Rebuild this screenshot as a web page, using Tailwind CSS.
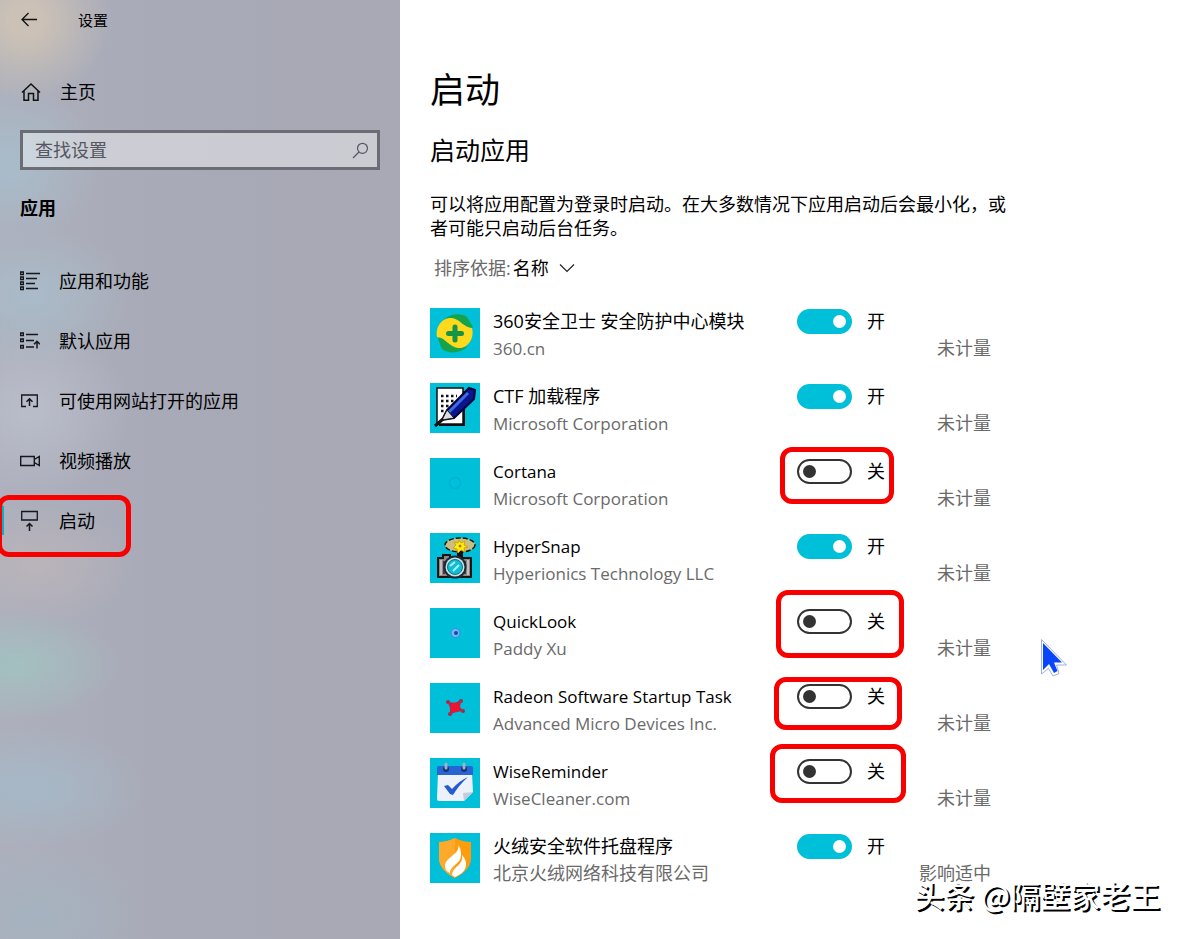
<!DOCTYPE html>
<html lang="zh-CN">
<head>
<meta charset="utf-8">
<meta name="viewport" content="width=device-width, initial-scale=1">
<title>设置</title>
<script src="https://cdn.jsdelivr.net/npm/@tailwindcss/browser@4"></script>
</head>
<body class="relative flex min-h-screen overflow-x-hidden bg-white font-['Open_Sans','Noto_Sans_CJK_SC',sans-serif] text-[18px] leading-[27px] text-black">

<aside class="w-[400px] shrink-0 bg-[#a8a9b6] bg-[radial-gradient(ellipse_85px_80px_at_25px_20px,#cbc1b6_20%,transparent),radial-gradient(ellipse_90px_80px_at_10px_165px,#a9bbc9_10%,transparent),radial-gradient(ellipse_100px_70px_at_30px_295px,#aabac8_10%,transparent),radial-gradient(ellipse_100px_90px_at_30px_410px,#b8bcc8_10%,transparent),radial-gradient(ellipse_100px_60px_at_35px_565px,#b9b3ba_10%,transparent),radial-gradient(ellipse_105px_55px_at_15px_665px,#a4bfc0_10%,transparent),radial-gradient(ellipse_115px_60px_at_30px_788px,#a7b7c6_15%,transparent),radial-gradient(ellipse_110px_70px_at_35px_915px,#a6b2bf_10%,transparent),linear-gradient(90deg,#adb0bc,#a8aab7_40%,#a9a8b5)]">
  <header class="flex h-10 items-center">
    <button type="button" aria-label="返回" class="ml-5 flex h-8 w-5 items-center">
      <svg width="18" height="16" viewBox="0 0 18 16" fill="none" stroke="#111" stroke-width="1.3"><path d="M17 7.5H2M8.500 1L2 7.500L8.500 14"/></svg>
    </button>
    <span class="ml-[38px] text-[15px]">设置</span>
  </header>

  <a href="#home" class="mt-8 flex h-10 items-center px-5">
    <svg width="22" height="20" viewBox="0 0 22 20" fill="none" stroke="#111" stroke-width="1.5"><path d="M2 10.500L11 2L20 10.500M4 9V18.300H8.500V11.500H13.500V18.300H18V9"/></svg>
    <span class="ml-[18px]">主页</span>
  </a>

  <div class="mx-5 mt-[18px] flex h-10 items-center border-3 border-[#6b6c74] bg-white/40 pr-2 pl-3">
    <input type="text" aria-label="查找设置" placeholder="查找设置" class="min-w-0 flex-1 bg-transparent outline-none placeholder:text-[#55565f]">
    <svg width="17" height="17" viewBox="0 0 17 17" fill="none" stroke="#55565f" stroke-width="1.2"><circle cx="10.500" cy="6.300" r="5"/><path d="M7 10L1 16"/></svg>
  </div>

  <h2 class="mt-[25px] px-5 font-bold">应用</h2>

  <nav class="mt-[29px]">
    <a href="#apps" class="flex h-[60px] items-center gap-[19px] px-5">
      <svg width="20" height="20" viewBox="0 0 20 20" fill="none" stroke="#16161c"><path d="M.7 1h2.600v2.600H.7zM.7 6h2.600v2.600H.7zM.7 11h2.600v2.600H.7zM.7 16h2.600v2.600H.7z" stroke-width="1.400"/><path d="M6 2.500h14M6 7.500h11M6 12.500h9M6 17.500h12" stroke-width="1.300"/></svg>
      <span>应用和功能</span>
    </a>
    <a href="#defaults" class="flex h-[60px] items-center gap-[19px] px-5">
      <svg width="20" height="20" viewBox="0 0 20 20" fill="none" stroke="#16161c"><path d="M.7 2h2.600v2.600H.7zM.7 8h2.600v2.600H.7zM.7 14.500h2.600v2.600H.7z" stroke-width="1.400"/><path d="M6 3.500h12M6 9.500h8M6 16h8" stroke-width="1.300"/><path d="M17 17.500V10.500M14 13.300L17 10.300L20 13.300" stroke-width="1.500"/></svg>
      <span>默认应用</span>
    </a>
    <a href="#websites" class="flex h-[60px] items-center gap-[19px] px-5">
      <svg width="20" height="20" viewBox="0 0 20 20" fill="none" stroke="#16161c"><path d="M6 15.500H1.700V4H17.300V15.500H13" stroke-width="1.300"/><path d="M9.500 15V8M6.500 10.800L9.500 7.800L12.500 10.800" stroke-width="1.500"/></svg>
      <span>可使用网站打开的应用</span>
    </a>
    <a href="#video" class="flex h-[60px] items-center gap-[19px] px-5">
      <svg width="20" height="20" viewBox="0 0 20 20" fill="none" stroke="#16161c" stroke-width="1.400"><path d="M.7 5.500H14.300V14.500H.7zM14.300 8.500L19.300 5.500V14.500L14.300 11.500"/></svg>
      <span>视频播放</span>
    </a>
    <a href="#startup" aria-current="page" class="relative flex h-[60px] items-center gap-[19px] px-5">
      <span class="absolute top-[15px] left-0 h-[29px] w-1 bg-[#00b4cc]"></span>
      <svg width="20" height="24" viewBox="0 0 20 24" fill="none" stroke="#16161c"><path d="M1.700 2.500H17.300V11H1.700z" stroke-width="1.300"/><path d="M9.500 22V14.500M6.500 17.500L9.500 14.500L12.500 17.500" stroke-width="1.500"/></svg>
      <span>启动</span>
      <span class="absolute top-1 -left-[3px] h-[62px] w-[134px] rounded-xl border-5 border-[#f80000]"></span>
    </a>
  </nav>
</aside>

<main class="min-w-0 flex-1 px-[30px]">
  <div class="max-w-[561px]">
    <h1 class="mt-[66px] text-[35px] leading-[48px]">启动</h1>
    <h2 class="mt-[18px] text-[25px] leading-[36px]">启动应用</h2>
    <p class="mt-[24px] -mr-4 leading-6">可以将应用配置为登录时启动。在大多数情况下应用启动后会最小化，或者可能只启动后台任务。</p>
    <div class="mt-3 flex h-8 items-center pl-1">
      <label for="sort" class="text-[#6a6a6a]">排序依据:</label>
      <div class="relative ml-[2px] flex items-center">
        <select id="sort" class="appearance-none bg-transparent pr-[26px] outline-none"><option>名称</option></select>
        <svg class="pointer-events-none absolute right-0" width="16" height="10" viewBox="0 0 16 10" fill="none" stroke="#222" stroke-width="1.200"><path d="M1 1.500L8 8.500L15 1.500"/></svg>
      </div>
    </div>

    <ul class="mt-6">
      <li class="relative flex h-[75px] items-start">
        <svg class="size-[50px] shrink-0 bg-[#00bfd8]" viewBox="0 0 50 50"><path d="M13 13C20 5 31 5 37 9L43 19C41 22 38 19 34 17C27 13 22 9 13 13z" fill="#16a34c"/><path d="M38 38C30 46 19 46 12 41L8 31C10 28 13 31 16 33C23 38 29 42 38 38z" fill="#16a34c"/><path d="M7 29C5 18 13 9 22 10C30 11 34 20 42 20C45 31 37 41 28 40C19 39 15 29 7 29z" fill="#ffd91c"/><path d="M25 19v13M18.500 25.500h13" stroke="#159447" stroke-width="5" stroke-linecap="round"/></svg>
        <div class="ml-[13px] min-w-0 flex-1"><p>360安全卫士 安全防护中心模块</p><p class="text-[17px] text-[#6a6a6a]">360.cn</p></div>
        <label class="flex w-[89px] shrink-0 items-center gap-[15px]"><input type="checkbox" role="switch" checked class="h-[25px] w-[55px] shrink-0 appearance-none rounded-full border-2 border-[#333] before:m-1 before:block before:size-[13px] before:rounded-full before:bg-[#333] checked:border-[#00bfd8] checked:bg-[#00bfd8] checked:before:translate-x-[30px] checked:before:bg-white"><span>开</span></label>
        <span class="mt-[27px] w-[105px] shrink-0 text-right text-[#6a6a6a]">未计量</span>
      </li>
      <li class="relative flex h-[75px] items-start">
        <svg class="size-[50px] shrink-0 bg-[#00bfd8]" viewBox="0 0 50 50"><path d="M9 8h26v35H9z" fill="#101010"/><path d="M7 5h26v36H7z" fill="#fff" stroke="#111" stroke-width="1.500"/><path d="M11 13h16M11 18h16M11 23h14M11 28h9" stroke="#111" stroke-width="2.500" stroke-dasharray="2.500 2.500"/><path d="M12 37L17 27L39 5L45 7L44 16L24 35z" fill="#0b168e" stroke="#02043a" stroke-width="2"/><path d="M19 29L38 10" stroke="#3f6be2" stroke-width="3"/><path d="M12 37L17 27L24 35z" fill="#ddd" stroke="#111"/><path d="M5 43L13 36" stroke="#111" stroke-width="3"/></svg>
        <div class="ml-[13px] min-w-0 flex-1"><p>CTF 加载程序</p><p class="text-[17px] text-[#6a6a6a]">Microsoft Corporation</p></div>
        <label class="flex w-[89px] shrink-0 items-center gap-[15px]"><input type="checkbox" role="switch" checked class="h-[25px] w-[55px] shrink-0 appearance-none rounded-full border-2 border-[#333] before:m-1 before:block before:size-[13px] before:rounded-full before:bg-[#333] checked:border-[#00bfd8] checked:bg-[#00bfd8] checked:before:translate-x-[30px] checked:before:bg-white"><span>开</span></label>
        <span class="mt-[27px] w-[105px] shrink-0 text-right text-[#6a6a6a]">未计量</span>
      </li>
      <li class="relative flex h-[75px] items-start">
        <svg class="size-[50px] shrink-0 bg-[#00bfd8]" viewBox="0 0 50 50"><circle cx="25" cy="25" r="5.500" fill="none" stroke="#00b1d8" stroke-width="1.500"/></svg>
        <div class="ml-[13px] min-w-0 flex-1 text-[17px]"><p>Cortana</p><p class="text-[#6a6a6a]">Microsoft Corporation</p></div>
        <label class="flex w-[89px] shrink-0 items-center gap-[15px]"><input type="checkbox" role="switch" class="h-[25px] w-[55px] shrink-0 appearance-none rounded-full border-2 border-[#333] before:m-1 before:block before:size-[13px] before:rounded-full before:bg-[#333] checked:border-[#00bfd8] checked:bg-[#00bfd8] checked:before:translate-x-[30px] checked:before:bg-white"><span>关</span></label>
        <span class="mt-[27px] w-[105px] shrink-0 text-right text-[#6a6a6a]">未计量</span>
        <span class="pointer-events-none absolute -top-[11px] right-[97px] h-[57px] w-[114px] rounded-xl border-5 border-[#f80000]"></span>
      </li>
      <li class="relative flex h-[75px] items-start">
        <svg class="size-[50px] shrink-0 bg-[#00bfd8]" viewBox="0 0 50 50"><ellipse cx="30" cy="12" rx="15" ry="7" fill="#c9bf84" stroke="#17170f" stroke-width="1.500" stroke-dasharray="5 2"/><path d="M27 17h6v8h-6z" fill="#111"/><path d="M29 7l2 3 4-2-1 4 4 2-4 1 1 4-4-2-3 3-1-4-4-1 3-3-2-3 4 1z" fill="#ffee12" stroke="#d4a300"/><circle cx="30" cy="13" r="1.500" fill="#b97900"/><path d="M8 25h5v-3h7v3h21v19H8z" fill="#908887" stroke="#151515" stroke-width="2"/><path d="M11 27v15M38 27v15" stroke="#c9bdbb" stroke-width="2"/><path d="M14 28v13M35 28v13" stroke="#453c40" stroke-width="2"/><circle cx="25" cy="34" r="11.500" fill="#202735"/><circle cx="25" cy="34" r="9.500" fill="#c7e4e9"/><circle cx="25" cy="34" r="7.500" fill="#11bdd2" stroke="#187581"/><path d="M20 33l5-4M23 38l6-6" stroke="#a1f4ff" stroke-width="2"/></svg>
        <div class="ml-[13px] min-w-0 flex-1 text-[17px]"><p>HyperSnap</p><p class="text-[#6a6a6a]">Hyperionics Technology LLC</p></div>
        <label class="flex w-[89px] shrink-0 items-center gap-[15px]"><input type="checkbox" role="switch" checked class="h-[25px] w-[55px] shrink-0 appearance-none rounded-full border-2 border-[#333] before:m-1 before:block before:size-[13px] before:rounded-full before:bg-[#333] checked:border-[#00bfd8] checked:bg-[#00bfd8] checked:before:translate-x-[30px] checked:before:bg-white"><span>开</span></label>
        <span class="mt-[27px] w-[105px] shrink-0 text-right text-[#6a6a6a]">未计量</span>
      </li>
      <li class="relative flex h-[75px] items-start">
        <svg class="size-[50px] shrink-0 bg-[#00bfd8]" viewBox="0 0 50 50"><circle cx="25.500" cy="25" r="4.500" fill="#72b9f5" stroke="#338ce3"/><circle cx="26" cy="25" r="2" fill="#124d9e"/></svg>
        <div class="ml-[13px] min-w-0 flex-1 text-[17px]"><p>QuickLook</p><p class="text-[#6a6a6a]">Paddy Xu</p></div>
        <label class="flex w-[89px] shrink-0 items-center gap-[15px]"><input type="checkbox" role="switch" class="h-[25px] w-[55px] shrink-0 appearance-none rounded-full border-2 border-[#333] before:m-1 before:block before:size-[13px] before:rounded-full before:bg-[#333] checked:border-[#00bfd8] checked:bg-[#00bfd8] checked:before:translate-x-[30px] checked:before:bg-white"><span>关</span></label>
        <span class="mt-[27px] w-[105px] shrink-0 text-right text-[#6a6a6a]">未计量</span>
        <span class="pointer-events-none absolute -top-[18px] right-[87px] h-[68px] w-[128px] rounded-xl border-5 border-[#f80000]"></span>
      </li>
      <li class="relative flex h-[75px] items-start">
        <svg class="size-[50px] shrink-0 bg-[#00bfd8]" viewBox="0 0 50 50"><g fill="#a32a4e"><circle cx="18" cy="19" r="2"/><circle cx="31" cy="18" r="2"/><circle cx="33" cy="28" r="2"/><circle cx="20" cy="31" r="2"/></g><path d="M18 19L25 20L31 17L30 24L33 28L25 29L20 32L20 25z" fill="#8b315c"/><path d="M18 20L32 28M31 18L20 31" stroke="#d01f40" stroke-width="2"/><circle cx="25" cy="24.500" r="5" fill="#ef1431"/></svg>
        <div class="ml-[13px] min-w-0 flex-1 text-[17px]"><p>Radeon Software Startup Task</p><p class="text-[#6a6a6a]">Advanced Micro Devices Inc.</p></div>
        <label class="flex w-[89px] shrink-0 items-center gap-[15px]"><input type="checkbox" role="switch" class="h-[25px] w-[55px] shrink-0 appearance-none rounded-full border-2 border-[#333] before:m-1 before:block before:size-[13px] before:rounded-full before:bg-[#333] checked:border-[#00bfd8] checked:bg-[#00bfd8] checked:before:translate-x-[30px] checked:before:bg-white"><span>关</span></label>
        <span class="mt-[27px] w-[105px] shrink-0 text-right text-[#6a6a6a]">未计量</span>
        <span class="pointer-events-none absolute -top-[6px] right-[89px] h-[53px] w-[128px] rounded-xl border-5 border-[#f80000]"></span>
      </li>
      <li class="relative flex h-[75px] items-start">
        <svg class="size-[50px] shrink-0 bg-[#00bfd8]" viewBox="0 0 50 50"><path d="M8 15H42L43 34L34 43H9Q7 43 7 41z" fill="#edf1fb"/><path d="M9 8H41Q43 8 43 10V17H7V10Q7 8 9 8z" fill="#2865d3"/><path d="M43 34L34 43L33 35z" fill="#c2ccdc"/><circle cx="16" cy="11" r="3" fill="#15336f"/><circle cx="34" cy="11" r="3" fill="#15336f"/><path d="M16 6v4M34 6v4" stroke="#9fb2cc" stroke-width="3" stroke-linecap="round"/><path d="M14 28L18 27L22 31Q29 23 38 19Q29 27 23 37L20 36z" fill="#245bd1"/></svg>
        <div class="ml-[13px] min-w-0 flex-1 text-[17px]"><p>WiseReminder</p><p class="text-[#6a6a6a]">WiseCleaner.com</p></div>
        <label class="flex w-[89px] shrink-0 items-center gap-[15px]"><input type="checkbox" role="switch" class="h-[25px] w-[55px] shrink-0 appearance-none rounded-full border-2 border-[#333] before:m-1 before:block before:size-[13px] before:rounded-full before:bg-[#333] checked:border-[#00bfd8] checked:bg-[#00bfd8] checked:before:translate-x-[30px] checked:before:bg-white"><span>关</span></label>
        <span class="mt-[27px] w-[105px] shrink-0 text-right text-[#6a6a6a]">未计量</span>
        <span class="pointer-events-none absolute -top-[14px] right-[85px] h-[59px] w-[136px] rounded-xl border-5 border-[#f80000]"></span>
      </li>
      <li class="relative flex h-[75px] items-start">
        <svg class="size-[50px] shrink-0 bg-[#00bfd8]" viewBox="0 0 50 50"><path d="M25 5Q33 9 41 9V25Q41 37 25 45Q9 37 9 25V9Q17 9 25 5z" fill="#ff9c0b"/><path d="M25 5Q17 9 9 9V25Q9 37 25 45z" fill="#ffa92a"/><path d="M28 12C31 21 15 24 15 33C15 37 18 39 20 40C20 32 32 31 31 21C31 17 30 14 28 12z" fill="#fff"/><path d="M32 22C34 32 23 33 22 42L25 44C32 41 36 37 36 31C36 27 34 24 32 22z" fill="#fff"/></svg>
        <div class="ml-[13px] min-w-0 flex-1"><p>火绒安全软件托盘程序</p><p class="text-[#6a6a6a]">北京火绒网络科技有限公司</p></div>
        <label class="flex w-[89px] shrink-0 items-center gap-[15px]"><input type="checkbox" role="switch" checked class="h-[25px] w-[55px] shrink-0 appearance-none rounded-full border-2 border-[#333] before:m-1 before:block before:size-[13px] before:rounded-full before:bg-[#333] checked:border-[#00bfd8] checked:bg-[#00bfd8] checked:before:translate-x-[30px] checked:before:bg-white"><span>开</span></label>
        <span class="mt-[27px] w-[105px] shrink-0 text-right text-[#6a6a6a]">影响适中</span>
      </li>
    </ul>
  </div>
</main>

<!-- Mouse pointer -->
<svg class="pointer-events-none absolute top-[638px] left-[1040px]" width="28" height="40" viewBox="0 0 28 40"><path d="M1.500 1.500V36L8.500 30.500L13 38L19 35.500L16.500 27H26.500z" fill="#fff" stroke="#9eb0dc"/><path d="M3 5V32L9 26L14 35L17.500 33L14 24.500H22z" fill="#0b45fb"/></svg>

<!-- Watermark -->
<p class="pointer-events-none absolute right-7 bottom-[30px] font-['Noto_Sans_CJK_SC',sans-serif] text-[30px] leading-[30px] font-medium whitespace-nowrap text-white [text-shadow:2px_2px_0_#000]">头条 @隔壁家老王</p>
</body>
</html>
